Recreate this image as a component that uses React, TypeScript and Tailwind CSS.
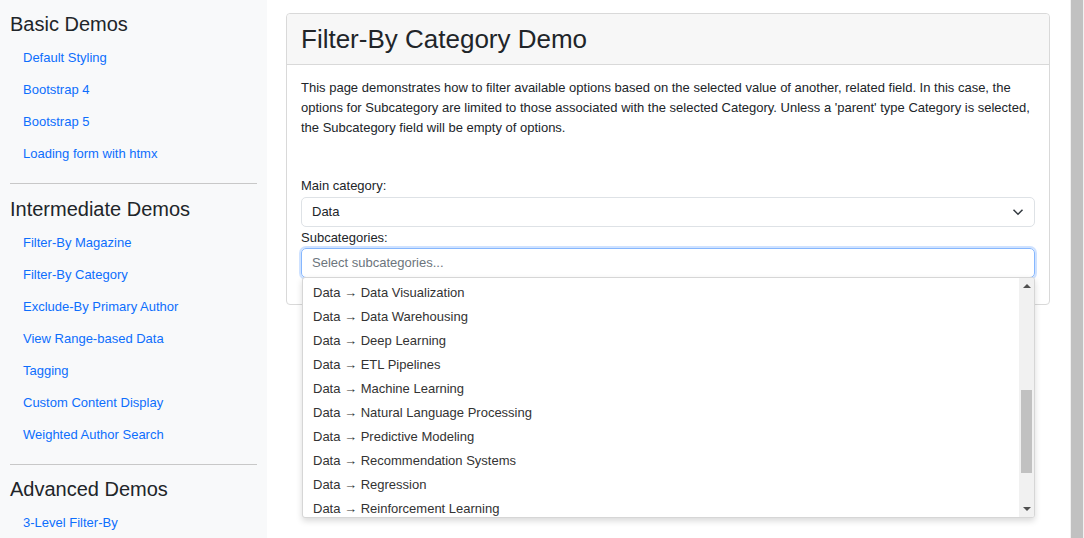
import React from "react";

const Link = ({ t }: { t: string }) => (
  <div className="h-[32px] flex items-center pl-[23px] text-[13px] text-[#0d6efd]">{t}</div>
);

const items = [
  "Data Visualization",
  "Data Warehousing",
  "Deep Learning",
  "ETL Pipelines",
  "Machine Learning",
  "Natural Language Processing",
  "Predictive Modeling",
  "Recommendation Systems",
  "Regression",
  "Reinforcement Learning",
];

export default function App() {
  return (
    <div className="w-[1084px] h-[538px] overflow-hidden flex bg-white text-[#212529]" style={{ fontFamily: '"Liberation Sans", Arial, sans-serif' }}>
      <div className="w-[267px] shrink-0 bg-[#f8f9fa] px-[10px] pt-[12px]">
        <div className="text-[20px] leading-[24px] mb-[6px]">Basic Demos</div>
        <div className="-mx-[10px]">
          <Link t="Default Styling" />
          <Link t="Bootstrap 4" />
          <Link t="Bootstrap 5" />
          <Link t="Loading form with htmx" />
        </div>
        <div className="border-t border-[#c8c8c8] mt-[13px] mb-[13px]" />
        <div className="text-[20px] leading-[24px] mb-[6px]">Intermediate Demos</div>
        <div className="-mx-[10px]">
          <Link t="Filter-By Magazine" />
          <Link t="Filter-By Category" />
          <Link t="Exclude-By Primary Author" />
          <Link t="View Range-based Data" />
          <Link t="Tagging" />
          <Link t="Custom Content Display" />
          <Link t="Weighted Author Search" />
        </div>
        <div className="border-t border-[#c8c8c8] mt-[13px] mb-[12px]" />
        <div className="text-[20px] leading-[24px] mb-[6px]">Advanced Demos</div>
        <div className="-mx-[10px]">
          <Link t="3-Level Filter-By" />
        </div>
      </div>
      <div className="flex-1 pl-[19px] pr-[20px] pt-[13px] relative">
        <div className="border border-[#d9d9d9] rounded-[4px] w-[764px]">
          <div className="bg-[#f7f7f7] border-b border-[#d9d9d9] h-[51px] px-[14px] flex items-center text-[26px] rounded-t-[4px]">Filter-By Category Demo</div>
          <div className="px-[14px] pt-[13px] pb-[26px] text-[13px]">
            <p className="leading-[20px] mb-[38px]">
              This page demonstrates how to filter available options based on the selected value of another, related field. In this case, the options for Subcategory are limited to those associated with the selected Category. Unless a 'parent' type Category is selected, the Subcategory field will be empty of options.
            </p>
            <div className="leading-[20px] mb-[1px]">Main category:</div>
            <div className="h-[30px] border border-[#dee2e6] rounded-[5px] flex items-center justify-between px-[10px]">
              <span>Data</span>
              <svg width="12" height="12" viewBox="0 0 16 16" fill="none" stroke="#343a40" strokeWidth="2"><path d="M2 5l6 6 6-6" /></svg>
            </div>
            <div className="leading-[20px] mt-[1px]">Subcategories:</div>
            <div className="h-[30px] border border-[#86b7fe] rounded-[5px] flex items-center px-[10px] text-[#6c757d] shadow-[0_0_0_2px_rgba(13,110,253,0.2)]">Select subcategories...</div>
          </div>
        </div>
        <div className="absolute left-[35px] top-[277px] w-[733px] h-[241px] bg-white border border-[#d6d6d6] rounded-[3px] shadow-[0_3px_6px_rgba(0,0,0,0.15)] flex overflow-hidden">
          <div className="flex-1 pt-[3px]">
            {items.map((i) => (
              <div key={i} className="h-[24px] flex items-center px-[10px] text-[13px] text-[#333]">Data → {i}</div>
            ))}
          </div>
          <div className="w-[15px] bg-[#f1f1f1] flex flex-col items-center">
            <div className="h-[16px] flex items-center"><div className="w-0 h-0 border-l-[4px] border-r-[4px] border-b-[4px] border-l-transparent border-r-transparent border-b-[#505050]" /></div>
            <div className="h-[96px]" />
            <div className="w-[11px] h-[83px] bg-[#c1c1c1]" />
            <div className="flex-1" />
            <div className="h-[16px] flex items-center"><div className="w-0 h-0 border-l-[4px] border-r-[4px] border-t-[4px] border-l-transparent border-r-transparent border-t-[#505050]" /></div>
          </div>
        </div>
      </div>
      <div className="w-[14px] shrink-0 bg-[#f1f1f1] flex justify-center">
        <div className="w-[12px] h-full bg-[#c1c1c1]" />
      </div>
    </div>
  );
}
